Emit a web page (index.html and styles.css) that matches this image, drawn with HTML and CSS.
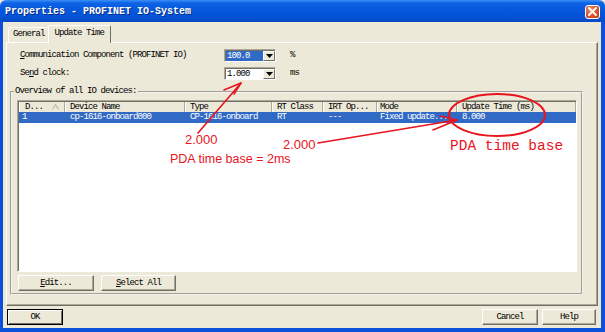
FILE: index.html
```html
<!DOCTYPE html>
<html>
<head>
<meta charset="utf-8">
<title>Properties - PROFINET IO-System</title>
<link rel="stylesheet" href="styles.css">
</head>
<body>
<div class="window">
  <div class="titlebar">
    <span class="title">Properties - PROFINET IO-System</span>
    <span class="close">
      <svg width="9" height="9" viewBox="0 0 9 9"><path d="M1 1 L8 8 M8 1 L1 8" stroke="#fff" stroke-width="1.8" stroke-linecap="round"/></svg>
    </span>
  </div>
  <div class="frame">
    <div class="tabs">
      <div class="tab">General</div>
      <div class="tab active">Update Time</div>
    </div>
    <div class="panel">
      <div class="field">
        <span class="field-label"><u>C</u>ommunication Component (PROFINET IO)</span>
        <div class="combo">
          <span class="combo-value selected">100.0</span>
          <span class="combo-btn"><svg width="7" height="4" viewBox="0 0 7 4"><path d="M0 0 H7 L3.5 4 Z" fill="#000"/></svg></span>
        </div>
        <span class="unit">%</span>
      </div>
      <div class="field">
        <span class="field-label">Se<u>n</u>d clock:</span>
        <div class="combo">
          <span class="combo-value">1.000</span>
          <span class="combo-btn"><svg width="7" height="4" viewBox="0 0 7 4"><path d="M0 0 H7 L3.5 4 Z" fill="#000"/></svg></span>
        </div>
        <span class="unit">ms</span>
      </div>
      <fieldset class="group">
        <legend>Overview of all IO devices:</legend>
        <div class="listview">
          <div class="lv-head">
            <span class="hc hc-first">D...<svg class="sort" width="7" height="6" viewBox="0 0 7 6"><path d="M0.5 5.5 L3.5 0.5 L6.5 5.5" stroke="#aca899" fill="none"/></svg></span>
            <span class="hc">Device Name</span>
            <span class="hc">Type</span>
            <span class="hc">RT Class</span>
            <span class="hc">IRT Op...</span>
            <span class="hc hc-mode">Mode</span>
            <span class="hc">Update Time (ms)</span>
          </div>
          <div class="lv-row selected">
            <span class="rc rc-first">1</span>
            <span class="rc">cp-1616-onboard000</span>
            <span class="rc">CP-1616-onboard</span>
            <span class="rc">RT</span>
            <span class="rc">---</span>
            <span class="rc rc-mode">Fixed update...</span>
            <span class="rc">8.000</span>
          </div>
        </div>
        <div class="group-buttons">
          <button class="btn btn-edit"><u>E</u>dit...</button>
          <button class="btn btn-select"><u>S</u>elect All</button>
        </div>
      </fieldset>
    </div>
    <div class="footer">
      <button class="btn btn-ok default">OK</button>
      <span class="spacer"></span>
      <button class="btn btn-cancel">Cancel</button>
      <button class="btn btn-help">Help</button>
    </div>
  </div>

  <div class="annot">
    <svg class="annot-svg" width="605" height="332" viewBox="0 0 605 332">
      <g stroke="#e8141e" stroke-width="1.6" fill="none" stroke-linecap="round" stroke-linejoin="round">
        <line x1="198" y1="133" x2="241" y2="83"/>
        <polyline points="224,90 241,83 234,94"/>
        <line x1="318" y1="143" x2="457" y2="120"/>
        <polyline points="440,116 457,120 433,130"/>
        <ellipse cx="497" cy="115" rx="48" ry="21" stroke-width="2"/>
      </g>
    </svg>
    <span class="note note-a">2.000</span>
    <span class="note note-b">2.000</span>
    <span class="note note-c">PDA time base = 2ms</span>
    <span class="note-mono">PDA time base</span>
  </div>
</div>
</body>
</html>
```
FILE: styles.css
```css
* { box-sizing: border-box; }
html, body { margin: 0; padding: 0; }
body {
  width: 605px;
  height: 332px;
  overflow: hidden;
  background: #ece9d8;
  font-family: "Liberation Mono", "DejaVu Sans Mono", monospace;
  font-size: 9px;
  letter-spacing: -0.9px;
  color: #000;
}
u { text-decoration: underline; text-underline-offset: 1px; }

.window {
  position: relative;
  width: 605px;
  height: 332px;
  display: flex;
  flex-direction: column;
}

/* title bar */
.titlebar {
  height: 22px;
  flex: none;
  display: flex;
  align-items: center;
  justify-content: space-between;
  padding: 1px 5px 0 5px;
  border-radius: 6px 6px 0 0;
  background: linear-gradient(to bottom, #3c8ef5 0px, #0e63e6 3px, #0558dd 10px, #0453d8 16px, #0849c4 22px);
}
.title {
  color: #fff;
  font-weight: bold;
  font-size: 10px;
  letter-spacing: 0;
  text-shadow: 1px 1px 0 #0a2a80;
}
.close {
  width: 15px;
  height: 14px;
  display: flex;
  align-items: center;
  justify-content: center;
  border: 1px solid #fff;
  border-radius: 3px;
  background: radial-gradient(circle at 35% 30%, #f08f6e 0%, #dd5a34 45%, #c5390f 100%);
}

/* window frame */
.frame {
  flex: 1;
  display: flex;
  flex-direction: column;
  background: #ece9d8;
  border-style: solid;
  border-color: #0b50d8;
  border-width: 0 4px 4px 3px;
  padding: 3px 3px 3px 3px;
}

/* tabs */
.tabs {
  height: 17px;
  flex: none;
  display: flex;
  align-items: flex-end;
  padding-left: 2px;
}
.tab {
  height: 15px;
  line-height: 13px;
  padding: 0 4px;
  border: 1px solid;
  border-bottom: none;
  border-color: #fff #716f64 transparent #fff;
  border-radius: 2px 2px 0 0;
  background: #ece9d8;
}
.tab.active {
  position: relative;
  z-index: 1;
  height: 18px;
  line-height: 14px;
  margin-left: -2px;
  margin-bottom: -1px;
  padding: 0 6px;
}

/* panel */
.panel {
  height: 264px;
  flex: none;
  border: 1px solid;
  border-color: #fff #716f64 #716f64 #fff;
  box-shadow: inset -1px -1px 0 #aca899;
  padding: 6px 7px 0 3px;
}

.field {
  display: flex;
  align-items: center;
  height: 12px;
  padding-left: 10px;
}
.field + .field { margin-top: 6px; }
.field-label { width: 204px; }
.combo {
  width: 52px;
  height: 13px;
  display: flex;
  background: #fff;
  border: 1px solid;
  border-color: #aca899 #fff #fff #aca899;
  box-shadow: inset 1px 1px 0 #716f64;
  padding: 1px 0 0 1px;
}
.combo-value {
  flex: 1;
  line-height: 10px;
  padding-left: 1px;
}
.combo-value.selected {
  background: #316ac5;
  color: #fff;
}
.combo-btn {
  width: 12px;
  height: 10px;
  display: flex;
  align-items: center;
  justify-content: center;
  background: #ece9d8;
  border: 1px solid;
  border-color: #fff #716f64 #716f64 #fff;
}
.unit { margin-left: 14px; }

/* group box */
.group {
  margin: 7px 7px 0 0;
  padding: 3px 4px 2px 5px;
  border: 2px groove #f4f2ea;
  min-width: 0;
}
.group legend {
  padding: 0 1px;
  margin-left: -3px;
  line-height: 11px;
}

.listview {
  height: 172px;
  background: #fff;
  border: 1px solid;
  border-color: #aca899 #fff #fff #aca899;
  box-shadow: inset 1px 1px 0 #716f64;
  padding: 1px 0 0 1px;
}
.lv-head, .lv-row {
  display: grid;
  grid-template-columns: 46px 120px 87px 51px 54px 80px 1fr;
}
.lv-head {
  height: 10px;
  background: #ece9d8;
}
.hc {
  line-height: 10px;
  padding-left: 5px;
  border-right: 1px solid #aca899;
  box-shadow: inset 1px 0 0 #fff;
  white-space: nowrap;
  overflow: hidden;
}
.hc-first {
  display: flex;
  justify-content: space-between;
  align-items: center;
  padding-right: 5px;
  padding-left: 6px;
}
.hc-mode { padding-left: 3px; }
.sort { flex: none; }

.lv-row {
  height: 11px;
}
.lv-row.selected {
  background: #316ac5;
  color: #fff;
}
.rc {
  line-height: 11px;
  padding-left: 5px;
  white-space: nowrap;
  overflow: hidden;
}
.rc-first { padding-left: 3px; }
.rc-mode { padding-left: 3px; }

.group-buttons {
  display: flex;
  gap: 7px;
  margin-top: 3px;
  padding-left: 1px;
}

/* buttons */
.btn {
  font: inherit;
  letter-spacing: inherit;
  height: 16px;
  padding: 0;
  background: #ece9d8;
  color: #000;
  border: 1px solid;
  border-color: #fff #716f64 #716f64 #fff;
  box-shadow: inset -1px -1px 0 #aca899;
}
.btn.default {
  border-color: #000;
  box-shadow: inset 1px 1px 0 #fff, inset -1px -1px 0 #716f64;
}
.btn-edit { width: 76px; }
.btn-select { width: 75px; }

.footer {
  display: flex;
  margin-top: 3px;
  height: 16px;
  flex: none;
}
.spacer { flex: 1; }
.btn-ok { width: 56px; margin-left: 1px; }
.btn-cancel { width: 56px; margin-right: 4px; }
.btn-help { width: 54px; margin-right: 2px; }

/* annotations drawn over the dialog */
.annot {
  position: absolute;
  left: 0;
  top: 0;
  width: 605px;
  height: 332px;
  pointer-events: none;
}
.annot-svg {
  position: absolute;
  left: 0;
  top: 0;
}
.note {
  position: absolute;
  color: #e8141e;
  font-family: "Liberation Sans", Arial, sans-serif;
  font-size: 13px;
  line-height: 1;
  letter-spacing: 0;
  white-space: nowrap;
}
.note-a { left: 185px; top: 133px; }
.note-b { left: 283px; top: 138px; }
.note-c { left: 170px; top: 153px; font-size: 12.5px; }
.note-mono {
  position: absolute;
  left: 450px;
  top: 139px;
  color: #e8141e;
  font-family: "Liberation Mono", "Courier New", monospace;
  font-size: 14.5px;
  line-height: 1;
  letter-spacing: 0;
  white-space: nowrap;
}
```
